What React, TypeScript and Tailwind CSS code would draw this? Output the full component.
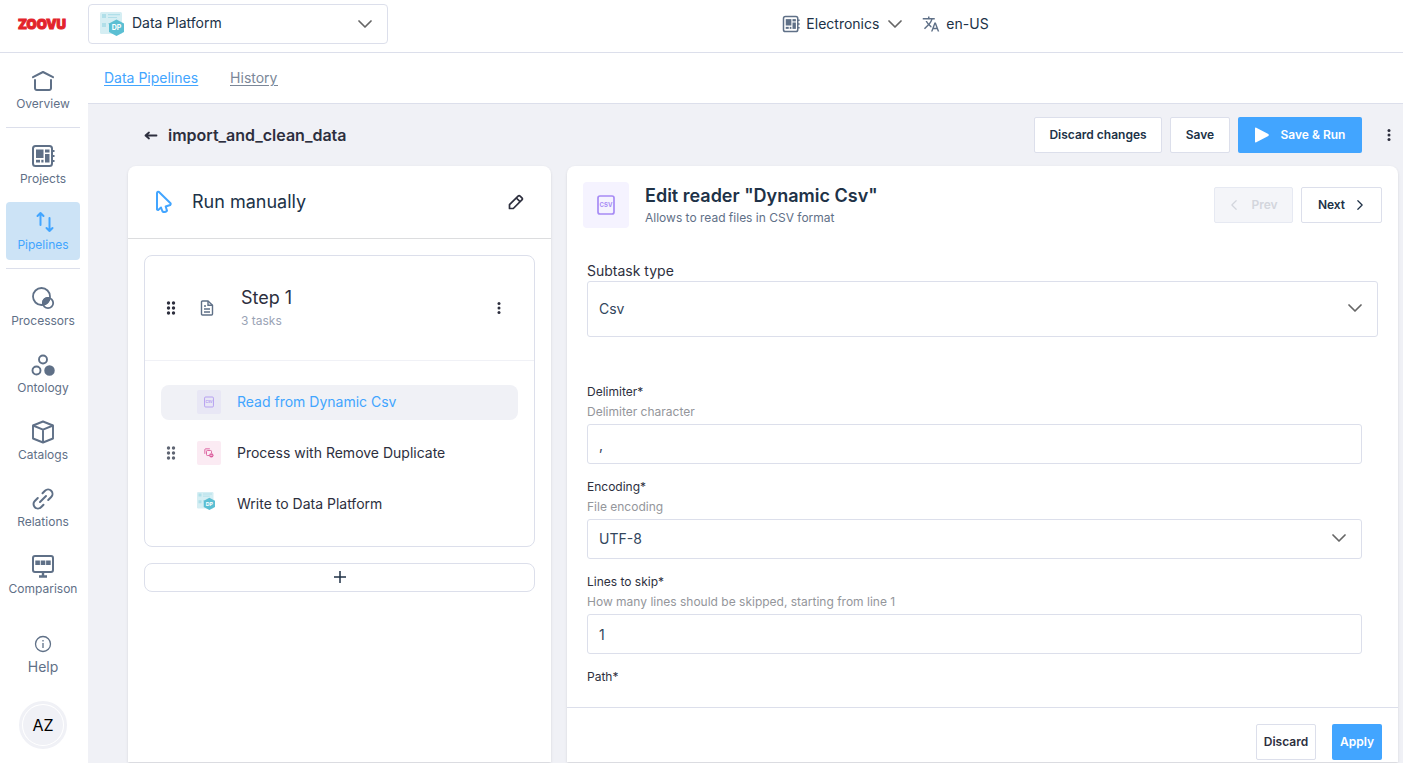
import React, { useState } from 'react';

type IconProps = { className?: string };

function HomeIcon({ className }: IconProps) {
  return (
    <svg className={className} viewBox="0 0 24 24" fill="none" stroke="currentColor" strokeWidth="2" strokeLinecap="round" strokeLinejoin="round">
      <path d="M2 8.2 12 3l10 5.2" />
      <path d="M4 11v8.2A1.8 1.8 0 0 0 5.8 21h12.4a1.8 1.8 0 0 0 1.8-1.8V11" />
    </svg>
  );
}

function BoardIcon({ className }: IconProps) {
  return (
    <svg className={className} viewBox="0 0 24 24" fill="none">
      <rect x="2" y="2" width="19" height="20" rx="2.5" stroke="currentColor" strokeWidth="2" />
      <path d="M21 7h2.5M21 12h2.5M21 17h2.5" stroke="currentColor" strokeWidth="2" />
      <g fill="currentColor">
        <rect x="5" y="5.5" width="7.5" height="8.5" />
        <rect x="14" y="5.5" width="4.5" height="3" />
        <rect x="14" y="10" width="4.5" height="8.5" />
        <rect x="5" y="15.8" width="4" height="2.7" />
        <rect x="10.3" y="15.8" width="2.2" height="2.7" />
      </g>
    </svg>
  );
}

function ArrowsIcon({ className }: IconProps) {
  return (
    <svg className={className} viewBox="0 0 24 24" fill="none" stroke="currentColor" strokeWidth="2" strokeLinecap="round" strokeLinejoin="round">
      <path d="M9.5 15V3M6.5 6l3-3 3 3" />
      <path d="M18.5 8v13M15.5 18l3 3 3-3" />
    </svg>
  );
}

function ProcessorsIcon({ className }: IconProps) {
  return (
    <svg className={className} viewBox="0 0 24 24" fill="none" stroke="currentColor" strokeWidth="1.8">
      <circle cx="10.5" cy="10.5" r="8.5" />
      <circle cx="17" cy="17" r="5.2" />
      <path d="M11.9 16.9A5.2 5.2 0 0 1 18.5 12 8.5 8.5 0 0 1 12 18.8a5.2 5.2 0 0 1-.1-1.9z" fill="currentColor" />
    </svg>
  );
}

function OntologyIcon({ className }: IconProps) {
  return (
    <svg className={className} viewBox="0 0 24 24" fill="none" stroke="currentColor" strokeWidth="1.9">
      <circle cx="12" cy="6.5" r="4" />
      <circle cx="5.5" cy="17.5" r="4" />
      <circle cx="18.5" cy="17.5" r="4.3" fill="currentColor" />
    </svg>
  );
}

function CubeIcon({ className }: IconProps) {
  return (
    <svg className={className} viewBox="0 0 24 24" fill="none" stroke="currentColor" strokeWidth="1.9" strokeLinejoin="round">
      <path d="M12 1.5 22 5.5v13l-10 4-10-4v-13z" />
      <path d="m2 5.5 10 4.2 10-4.2M12 9.7v12.8" />
    </svg>
  );
}

function LinkIcon({ className }: IconProps) {
  return (
    <svg className={className} viewBox="0 0 24 24" fill="none" stroke="currentColor" strokeWidth="2" strokeLinecap="round">
      <path d="m11.5 6.3 2.5-2.5a4.2 4.2 0 0 1 6.2 6.2l-3 3" />
      <path d="m12.5 17.7-2.5 2.5A4.2 4.2 0 0 1 3.8 14l3-3" />
      <path d="m9 15 6-6" />
    </svg>
  );
}

function MonitorIcon({ className }: IconProps) {
  return (
    <svg className={className} viewBox="0 0 24 24" fill="none">
      <rect x="2" y="2" width="20" height="16" rx="2" stroke="currentColor" strokeWidth="2" />
      <path d="M12 18v4M8 22.5h8" stroke="currentColor" strokeWidth="2.4" />
      <g fill="currentColor">
        <rect x="4.3" y="6.5" width="4.6" height="4.5" />
        <rect x="9.7" y="6.5" width="4.6" height="4.5" />
        <rect x="15.1" y="6.5" width="4.6" height="4.5" />
      </g>
    </svg>
  );
}

function InfoIcon({ className }: IconProps) {
  return (
    <svg className={className} viewBox="0 0 18 18" fill="none" stroke="currentColor" strokeWidth="1.3">
      <circle cx="9" cy="9" r="7.5" />
      <path d="M9 8v5M9 5v1.5" />
    </svg>
  );
}

function TranslateIcon({ className }: IconProps) {
  return (
    <svg className={className} viewBox="0 0 24 24" fill="currentColor">
      <path d="m12.87 15.07-2.54-2.51.03-.03A17.52 17.52 0 0 0 14.07 6H17V4h-7V2H8v2H1v1.99h11.17C11.5 7.92 10.44 9.75 9 11.35 8.07 10.32 7.3 9.19 6.69 8h-2c.73 1.63 1.73 3.17 2.98 4.56l-5.09 5.02L4 19l5-5 3.11 3.11zM18.5 10h-2L12 22h2l1.12-3h4.75L21 22h2zm-2.62 7 1.62-4.33L19.12 17z" />
    </svg>
  );
}

function ChevronIcon({ className }: IconProps) {
  return (
    <svg className={className} viewBox="0 0 14 14" fill="none" stroke="currentColor" strokeWidth="1.7" strokeLinecap="round" strokeLinejoin="round">
      <path d="m1 4 6 6 6-6" />
    </svg>
  );
}

function DataPlatformIcon({ className }: IconProps) {
  return (
    <svg className={className} viewBox="0 0 24 24">
      <rect width="22" height="22" rx="1.5" fill="#d5eef3" />
      <path d="M2 2h4v4H2zM2 11h4v4H2z" fill="#b0dfe9" />
      <path d="M8 2.7h12M8 5.5h9M8 11.7h4" stroke="#b0dfe9" strokeWidth="1.2" />
      <path d="m16.5 7.5 7.5 4v8.5l-7.5 4-7.5-4v-8.5z" fill="#5bbfd3" />
      <text x="16.5" y="18.3" textAnchor="middle" fill="#fff" fontSize="7" fontWeight="700">DP</text>
    </svg>
  );
}

function CursorIcon({ className }: IconProps) {
  return (
    <svg className={className} viewBox="0 0 24 24" fill="none" stroke="currentColor" strokeWidth="2" strokeLinejoin="round">
      <path d="M5 3v16.5l1.2.5 2.8-2.5 1.5 4q2.5 1.3 4.5-.7l-1.3-4.3 4.5-1.5q.8-.8.3-1.7L7 2Q5.2 1.2 5 3z" />
    </svg>
  );
}

function PencilIcon({ className }: IconProps) {
  return (
    <svg className={className} viewBox="0 0 16 16" fill="none" stroke="currentColor" strokeWidth="1.7" strokeLinejoin="round">
      <path d="M1.5 14.5v-3.8l8.6-8.6q1-1 2 0l1.8 1.8q1 1 0 2l-8.6 8.6z" />
      <path d="m8.3 4 3.7 3.7" />
    </svg>
  );
}

function DocumentIcon({ className }: IconProps) {
  return (
    <svg className={className} viewBox="0 0 14 16" fill="none" stroke="currentColor" strokeWidth="1.4">
      <path d="M2.5 1H8l4.5 4.3V14q0 1-1 1h-9q-1 0-1-1V2q0-1 1-1z" />
      <path d="M8 1v4.3h4.5M4 6h2M4 9h6M4 12h6" />
    </svg>
  );
}

function GripIcon({ className }: IconProps) {
  return (
    <svg className={className} viewBox="0 0 10 16" fill="currentColor">
      <circle cx="2.5" cy="3" r="1.7" />
      <circle cx="7.5" cy="3" r="1.7" />
      <circle cx="2.5" cy="8" r="1.7" />
      <circle cx="7.5" cy="8" r="1.7" />
      <circle cx="2.5" cy="13" r="1.7" />
      <circle cx="7.5" cy="13" r="1.7" />
    </svg>
  );
}

function DotsIcon({ className }: IconProps) {
  return (
    <svg className={className} viewBox="0 0 4 16" fill="currentColor">
      <circle cx="2" cy="3.5" r="1.5" />
      <circle cx="2" cy="8" r="1.5" />
      <circle cx="2" cy="12.5" r="1.5" />
    </svg>
  );
}

function CsvIcon({ className }: IconProps) {
  return (
    <svg className={className} viewBox="0 0 18 20" fill="none">
      <rect x="1" y="1" width="16" height="18" rx="2" stroke="currentColor" strokeWidth="1.7" />
      <text x="9" y="12" textAnchor="middle" fill="currentColor" fontSize="6" fontWeight="700">CSV</text>
    </svg>
  );
}

function RemoveDuplicateIcon({ className }: IconProps) {
  return (
    <svg className={className} viewBox="0 0 12 12" fill="none" stroke="currentColor" strokeWidth="1.1">
      <path d="M1 7V2q0-1 1-1h5" />
      <path d="M6 9H4q-1 0-1-1V4q0-1 1-1h4q1 0 1 1v2" />
      <circle cx="8.8" cy="8.8" r="2.6" fill="currentColor" stroke="none" />
      <path d="M7.5 8.8h2.6" stroke="#fff" strokeWidth=".8" />
    </svg>
  );
}

type NavItemProps = {
  icon: React.ComponentType<IconProps>;
  label: string;
  active?: boolean;
};

function NavItem({ icon: Icon, label, active }: NavItemProps) {
  return (
    <a
      href="#"
      className={`flex h-[58px] flex-col items-center rounded pt-2 text-xs leading-[22px] ${
        active ? 'bg-[#cce3f6] text-[#42a5ff]' : 'text-[#5f7087]'
      }`}
    >
      <Icon className="h-6 w-6 shrink-0" />
      {label}
    </a>
  );
}

function Sidebar() {
  return (
    <nav className="flex w-[88px] shrink-0 flex-col bg-white pt-2 pr-2 pl-1.5">
      <div className="flex flex-col gap-2">
        <NavItem icon={HomeIcon} label="Overview" />
        <hr className="border-[#dcdfeb]" />
        <NavItem icon={BoardIcon} label="Projects" />
        <NavItem icon={ArrowsIcon} label="Pipelines" active />
        <hr className="border-[#dcdfeb]" />
      </div>
      <div className="mt-[9px] flex flex-col gap-[9px]">
        <NavItem icon={ProcessorsIcon} label="Processors" />
        <NavItem icon={OntologyIcon} label="Ontology" />
        <NavItem icon={CubeIcon} label="Catalogs" />
        <NavItem icon={LinkIcon} label="Relations" />
        <NavItem icon={MonitorIcon} label="Comparison" />
      </div>
      <a href="#" className="mt-[31px] flex flex-col items-center gap-1 text-sm text-[#5f7087]">
        <InfoIcon className="h-[18px] w-[18px]" />
        Help
      </a>
      <button className="mt-6 flex h-12 w-12 items-center justify-center self-center rounded-full border-[3px] border-[#f0f1f6] bg-white">
        <span className="flex h-10 w-10 items-center justify-center rounded-full bg-[#f0f1f6] text-base text-black">AZ</span>
      </button>
    </nav>
  );
}

function Header() {
  return (
    <header className="flex h-[53px] shrink-0 items-center border-b border-[#dcdfeb] bg-white">
      <a href="#" className="flex w-[88px] shrink-0 pb-1 pl-[18px] text-[13px] leading-5 font-black text-[#e3232b] [-webkit-text-stroke:1px_#e3232b]">
        ZOOVU
      </a>
      <div className="relative mb-1 w-[300px]">
        <select
          aria-label="Application"
          className="h-10 w-full appearance-none rounded border border-[#dcdfeb] bg-white pb-0.5 pl-[43px] text-sm text-[#203247]"
        >
          <option>Data Platform</option>
        </select>
        <DataPlatformIcon className="pointer-events-none absolute top-2 left-3 h-6 w-6" />
        <ChevronIcon className="pointer-events-none absolute top-[13px] right-4 h-3.5 w-3.5 text-[#666]" />
      </div>
      <div className="flex flex-1 items-center justify-center gap-5 pr-5 pb-1 text-sm text-[#203247]">
        <div className="flex items-center gap-1.5">
          <BoardIcon className="h-[18px] w-[18px] text-[#5f7087]" />
          <select aria-label="Project" className="appearance-none bg-white">
            <option>Electronics</option>
          </select>
          <ChevronIcon className="ml-0.5 h-3.5 w-3.5 text-[#666]" />
        </div>
        <button className="flex items-center gap-1.5">
          <TranslateIcon className="h-[18px] w-[18px] text-[#5f7087]" />
          en-US
        </button>
      </div>
    </header>
  );
}

const tasks = [
  { id: 'read', label: 'Read from Dynamic Csv', kind: 'csv' },
  { id: 'process', label: 'Process with Remove Duplicate', kind: 'duplicate' },
  { id: 'write', label: 'Write to Data Platform', kind: 'platform' },
];

function TaskIcon({ kind }: { kind: string }) {
  if (kind === 'csv') {
    return (
      <span className="flex h-6 w-6 items-center justify-center rounded-xs bg-[#e8e7f5] text-[#b39cf0]">
        <CsvIcon className="h-3 w-2.5" />
      </span>
    );
  }
  if (kind === 'duplicate') {
    return (
      <span className="flex h-6 w-6 items-center justify-center rounded-xs bg-[#fbebf3] text-[#db5c9c]">
        <RemoveDuplicateIcon className="h-2.5 w-2.5" />
      </span>
    );
  }
  return (
    <span className="flex h-6 w-6">
      <DataPlatformIcon className="h-[18px] w-[18px]" />
    </span>
  );
}

function StepsPanel() {
  const [selected, setSelected] = useState('read');

  return (
    <section className="w-[423px] shrink-0 rounded-t-lg bg-white shadow-sm">
      <div className="flex h-[73px] items-center border-b border-[#dcdddf] px-6">
        <CursorIcon className="h-6 w-6 text-[#42a5ff]" />
        <h2 className="flex-1 pl-4 text-lg text-[#203247]">Run manually</h2>
        <button aria-label="Edit trigger" className="pr-[3px]">
          <PencilIcon className="h-4 w-4 text-[#2d2f3e]" />
        </button>
      </div>

      <div className="flex flex-col gap-4 p-4">
        <div className="rounded-lg border border-[#dcdfeb]">
          <div className="flex h-[105px] items-center border-b border-[#f0f1f6] pr-[33px] pl-[21px]">
            <GripIcon className="h-4 w-2.5 text-[#2d2f3e]" />
            <DocumentIcon className="ml-6 h-4 w-3.5 text-[#5f7087]" />
            <div className="flex-1 pt-0.5 pl-[27px]">
              <h3 className="text-lg leading-6 text-[#2d2f3e]">Step 1</h3>
              <p className="text-xs leading-[22px] text-[#9aa3b5]">3 tasks</p>
            </div>
            <button aria-label="Step menu">
              <DotsIcon className="h-4 w-1 text-[#2d2f3e]" />
            </button>
          </div>

          <div className="flex flex-col gap-4 px-4 py-6">
            {tasks.map((task) => (
              <button
                key={task.id}
                onClick={() => setSelected(task.id)}
                className={`flex h-[35px] items-center rounded-lg pb-px pl-[5px] text-sm ${
                  selected === task.id ? 'bg-[#f0f1f6] text-[#42a5ff]' : 'text-[#2d2f3e]'
                }`}
              >
                <span className="w-[31px]">
                  {task.kind === 'duplicate' && <GripIcon className="h-4 w-2.5 text-[#5f6573]" />}
                </span>
                <TaskIcon kind={task.kind} />
                <span className="pl-4">{task.label}</span>
              </button>
            ))}
          </div>
        </div>

        <button aria-label="Add step" className="flex h-[29px] items-center justify-center rounded-lg border border-[#dcdfeb] pb-px">
          <svg className="h-3 w-3 text-[#203247]" viewBox="0 0 12 12" stroke="currentColor" strokeWidth="1.5">
            <path d="M6 0v12M0 6h12" />
          </svg>
        </button>
      </div>
    </section>
  );
}

type FieldProps = {
  id: string;
  label: string;
  hint: string;
  children: React.ReactNode;
};

function Field({ id, label, hint, children }: FieldProps) {
  return (
    <div className="pr-4 pb-[13px] text-xs leading-5">
      <label htmlFor={id} className="block text-[#2d2f3e]">
        {label}
      </label>
      <p className="mb-0.5 text-[#94969b]">{hint}</p>
      {children}
    </div>
  );
}

function EditPanel() {
  return (
    <section className="flex min-w-0 flex-1 flex-col rounded-t-lg bg-white shadow-sm">
      <div className="flex items-center p-4">
        <span className="flex h-[46px] w-[46px] items-center justify-center rounded bg-[#f5f3ff] text-[#a78bf5]">
          <CsvIcon className="h-5 w-[18px]" />
        </span>
        <div className="flex-1 pt-0.5 pl-4">
          <h2 className="text-lg leading-6 font-semibold text-[#203247]">Edit reader "Dynamic Csv"</h2>
          <p className="text-xs leading-5 text-[#5f7087]">Allows to read files in CSV format</p>
        </div>
        <div className="flex gap-2 text-xs font-semibold">
          <button disabled className="flex h-9 w-[79px] items-center justify-center gap-3 rounded-xs border border-[#e6e9f2] bg-[#f4f5f9] text-[#d3d6dd]">
            <ChevronIcon className="h-2.5 w-2.5 rotate-90" />
            Prev
          </button>
          <button className="flex h-9 w-[81px] items-center justify-center gap-2.5 rounded-xs border border-[#dcdfeb] text-[#203247]">
            Next
            <ChevronIcon className="h-2.5 w-2.5 -rotate-90" />
          </button>
        </div>
      </div>

      <form className="min-h-0 flex-1 overflow-y-auto px-5 pt-4 [scrollbar-width:none]">
        <label htmlFor="subtask" className="block text-sm leading-[21px] text-[#2d2f3e]">
          Subtask type
        </label>
        <div className="relative mb-[45px]">
          <select id="subtask" className="h-14 w-full appearance-none rounded-[3px] border border-[#dcdfeb] bg-white px-[11px] text-sm text-[#33465c]">
            <option>Csv</option>
          </select>
          <ChevronIcon className="pointer-events-none absolute top-5 right-4 h-3.5 w-3.5 text-[#666]" />
        </div>

        <Field id="delimiter" label="Delimiter*" hint="Delimiter character">
          <input id="delimiter" defaultValue="," className="h-10 w-full rounded-[3px] border border-[#dcdfeb] px-[11px] text-sm text-[#33465c]" />
        </Field>
        <Field id="encoding" label="Encoding*" hint="File encoding">
          <div className="relative">
            <select id="encoding" className="h-10 w-full appearance-none rounded-[3px] border border-[#dcdfeb] bg-white px-[11px] text-sm text-[#33465c]">
              <option>UTF-8</option>
            </select>
            <ChevronIcon className="pointer-events-none absolute top-3 right-4 h-3.5 w-3.5 text-[#666]" />
          </div>
        </Field>
        <Field id="skip" label="Lines to skip*" hint="How many lines should be skipped, starting from line 1">
          <input id="skip" defaultValue="1" className="h-10 w-full rounded-[3px] border border-[#dcdfeb] px-[11px] text-sm text-[#33465c]" />
        </Field>
        <div className="pr-4 text-xs leading-5">
          <label htmlFor="path" className="block text-[#2d2f3e]">
            Path*
          </label>
          <input id="path" className="mt-6 h-10 w-full rounded-[3px] border border-[#dcdfeb] px-[11px] text-sm text-[#33465c]" />
        </div>
      </form>

      <div className="flex shrink-0 justify-end gap-4 border-t border-[#dcdfeb] px-4 pt-4 pb-0.5 text-xs font-semibold">
        <button className="h-9 w-[60px] rounded-xs border border-[#dcdfeb] text-[#2d2f3e]">Discard</button>
        <button className="h-9 w-[50px] rounded-xs bg-[#42a5ff] text-white">Apply</button>
      </div>
    </section>
  );
}

export default function App() {
  return (
    <div className="flex h-screen flex-col overflow-hidden bg-white font-[Inter,sans-serif]">
      <Header />
      <div className="flex min-h-0 flex-1">
        <Sidebar />
        <main className="flex min-w-0 flex-1 flex-col bg-[#f0f1f6]">
          <div className="flex h-[51px] shrink-0 items-center gap-8 border-b border-[#dcdfeb] bg-white px-4 text-sm underline underline-offset-2">
            <a href="#" className="text-[#42a5ff]">Data Pipelines</a>
            <a href="#" className="text-[#7b8798]">History</a>
          </div>

          <div className="flex h-[62px] shrink-0 items-center gap-2 pr-3 pl-14">
            <button aria-label="Back">
              <svg className="h-3.5 w-3.5 text-[#2d2f3e]" viewBox="0 0 14 14" fill="none" stroke="currentColor" strokeWidth="1.8" strokeLinecap="round" strokeLinejoin="round">
                <path d="M12.5 7.5h-11M5 4.5l-3.5 3 3.5 3" />
              </svg>
            </button>
            <h1 className="flex-1 pl-0.5 text-base font-semibold text-[#2d2f3e]">import_and_clean_data</h1>
            <div className="flex gap-2 text-xs font-semibold">
              <button className="h-9 w-32 rounded-xs border border-[#dcdfeb] bg-white text-[#203247]">Discard changes</button>
              <button className="h-9 w-[60px] rounded-xs border border-[#dcdfeb] bg-white text-[#203247]">Save</button>
              <button className="flex h-9 w-[124px] items-center justify-center gap-3 rounded-xs bg-[#42a5ff] text-white">
                <svg className="h-4 w-3.5" viewBox="0 0 14 16" fill="currentColor">
                  <path d="M0 1.5Q0 0 1.3.7l12 6.4q1 .9 0 1.8l-12 6.4Q0 16 0 14.5z" />
                </svg>
                Save &amp; Run
              </button>
            </div>
            <button aria-label="Pipeline menu" className="pl-[17px]">
              <DotsIcon className="h-4 w-1 text-[#2d2f3e]" />
            </button>
          </div>

          <div className="flex min-h-0 flex-1 gap-4 pr-[5px] pb-px pl-10">
            <StepsPanel />
            <EditPanel />
          </div>
        </main>
      </div>
    </div>
  );
}
